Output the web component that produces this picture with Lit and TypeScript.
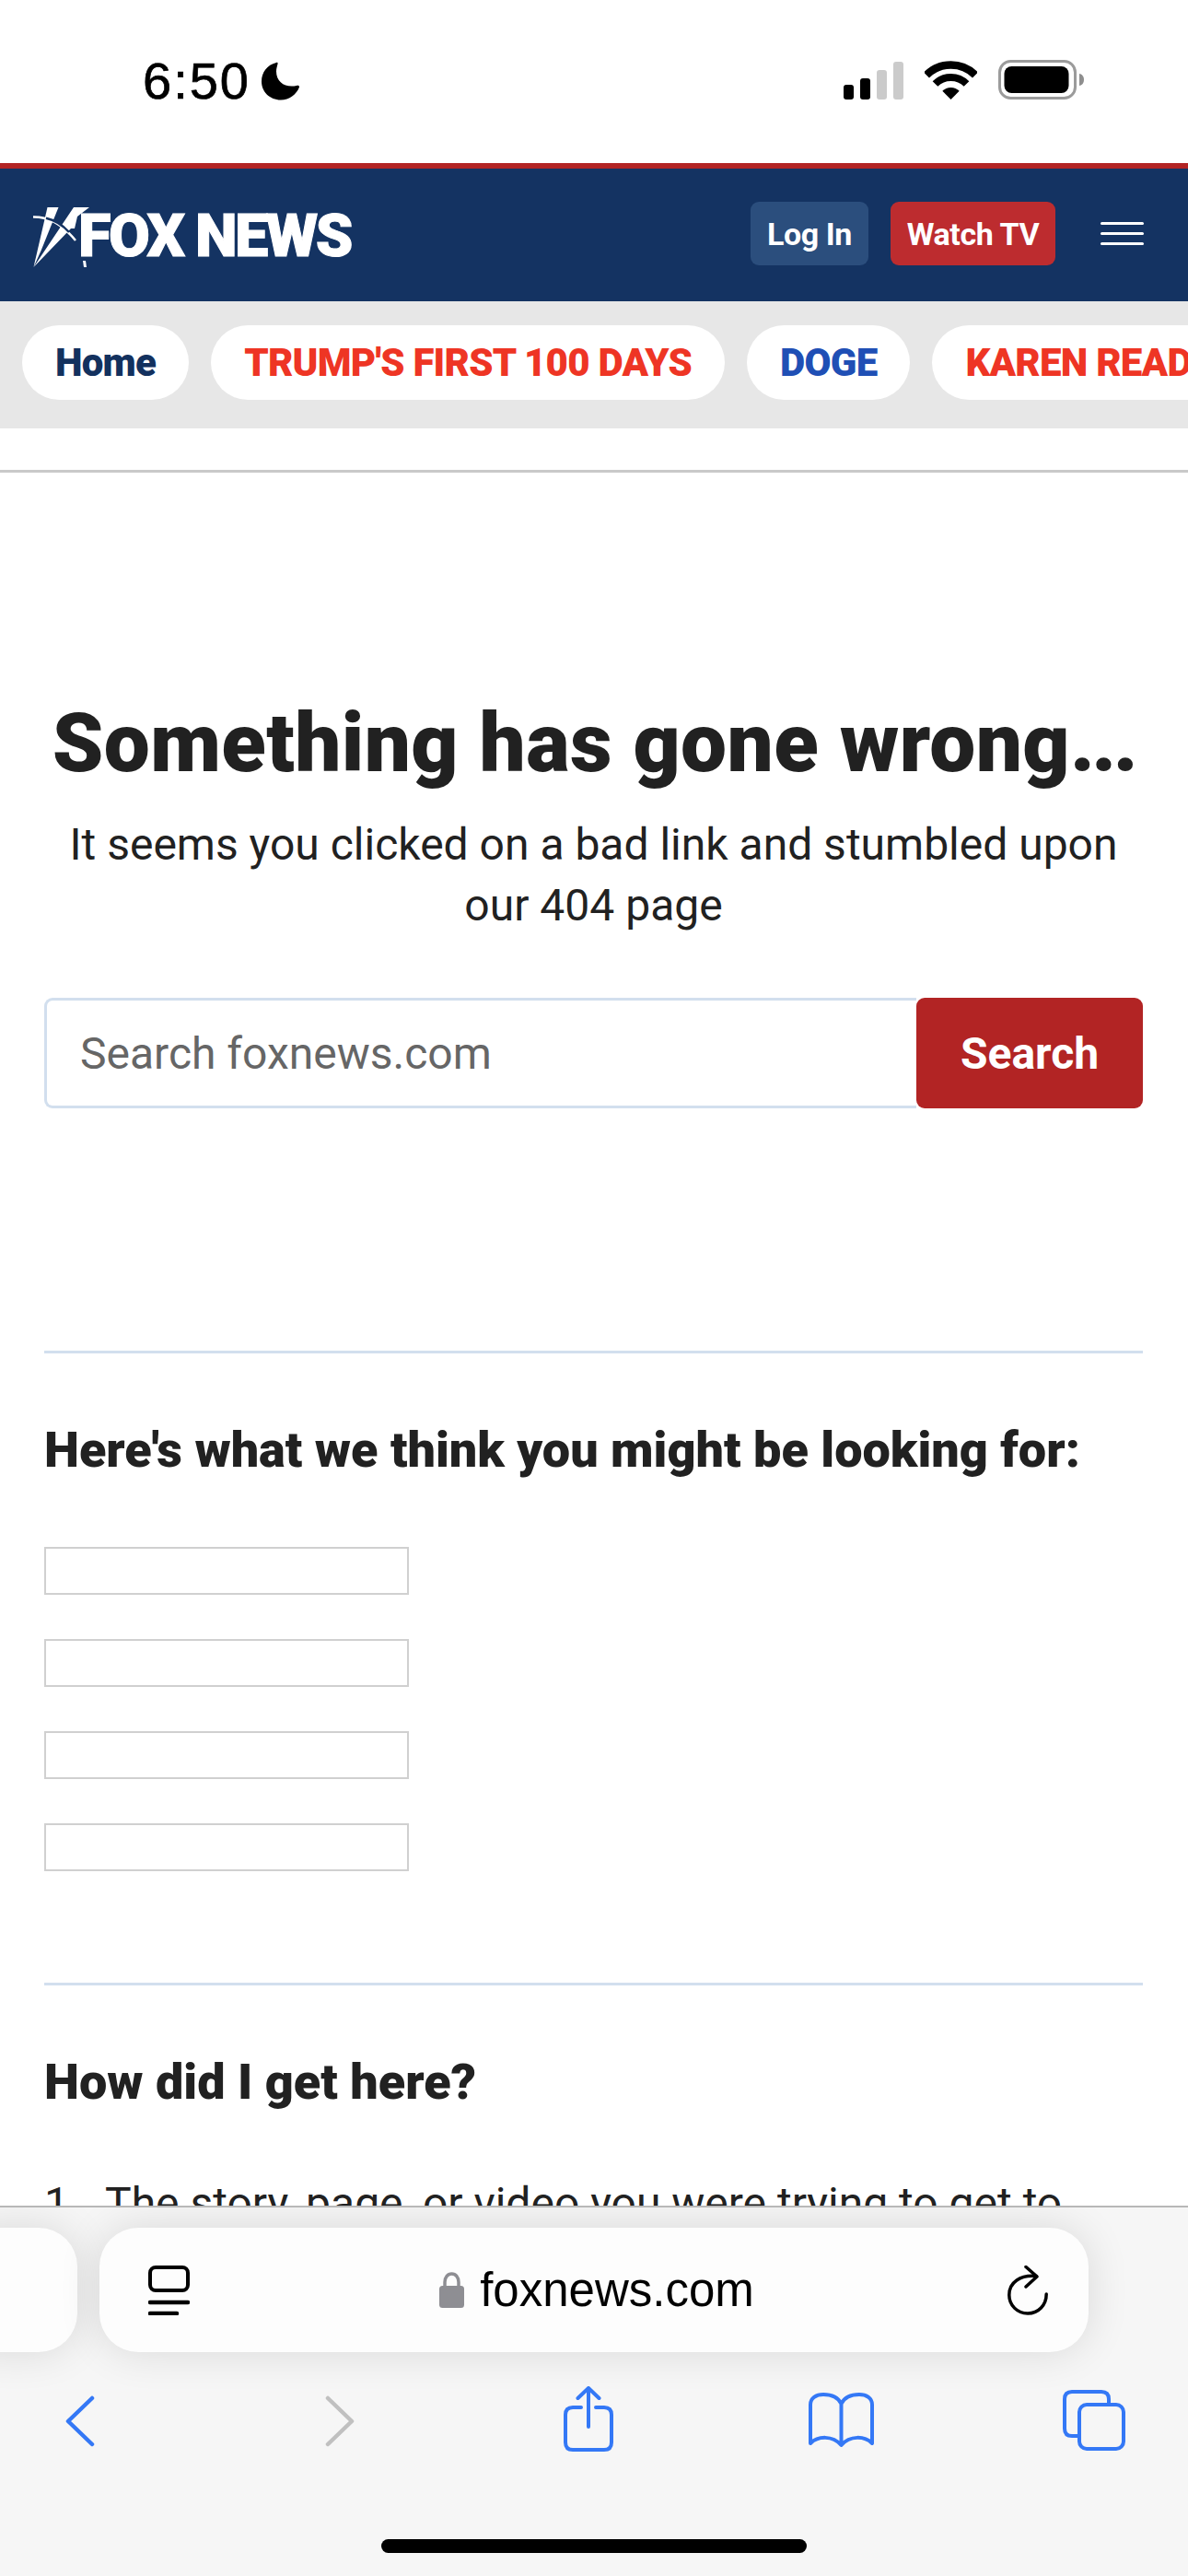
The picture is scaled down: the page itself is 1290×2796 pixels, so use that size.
import { LitElement, css, html } from "lit";
import { customElement } from "lit/decorators.js";

@customElement("app-root")
export class AppRoot extends LitElement {
  static styles = css`
    :host {
      display: flex;
      flex-direction: column;
      width: 1290px;
      height: 2796px;
      overflow: hidden;
      background: #fff;
      font-family: Roboto, sans-serif;
      color: #212121;
    }
    svg { display: block; flex: none; }

    /* status bar */
    .status {
      height: 177px;
      flex: none;
      box-sizing: border-box;
      padding: 0 113px 0 155px;
      display: flex;
      align-items: flex-start;
      font-family: "Liberation Sans", sans-serif;
      color: #000;
    }
    .time { font-size: 56px; line-height: 40px; margin-top: 68px; letter-spacing: 2px; -webkit-text-stroke: 0.7px #000; }
    .moon { margin: 67px 0 0 12px; }
    .sys { margin-left: auto; margin-top: 65px; display: flex; align-items: flex-end; gap: 23px; height: 43px; }
    .signal { display: flex; align-items: flex-end; gap: 7px; }
    .signal i { display: block; width: 11px; border-radius: 3px; background: #000; }
    .signal i.off { background: #cbcbcb; }
    .s1 { height: 16px; } .s2 { height: 23px; } .s3 { height: 32px; } .s4 { height: 41px; }

    /* site header */
    .masthead {
      height: 150px;
      flex: none;
      box-sizing: border-box;
      border-top: 6px solid #b22424;
      background: #143362;
      padding: 0 48px 0 36px;
      display: flex;
      align-items: center;
    }
    .logo { display: flex; align-items: flex-start; height: 66px; color: #fff; margin-top: 6px; }
    .logo svg { margin-right: -12px; }
    .logo span {
      font-weight: 900;
      font-size: 65px;
      line-height: 48px;
      margin-top: 7px;
      letter-spacing: -2.6px;
      white-space: nowrap;
      -webkit-text-stroke: 1px #fff;
    }
    .actions { margin-left: auto; margin-bottom: 3px; display: flex; align-items: center; }
    .btn {
      height: 69px;
      box-sizing: border-box;
      border-radius: 9px;
      display: flex;
      align-items: center;
      justify-content: center;
      color: #fff;
      font-weight: 700;
      font-size: 34px;
      letter-spacing: -0.4px;
      white-space: nowrap;
    }
    .login { width: 128px; background: #2b4e7d; margin-right: 24px; }
    .watch { width: 179px; background: #bd2c2f; margin-right: 49px; }
    .burger { display: flex; flex-direction: column; gap: 8px; width: 47px; }
    .burger i { display: block; height: 3px; border-radius: 2px; background: #fff; }

    /* section pills */
    .topics {
      height: 138px;
      flex: none;
      box-sizing: border-box;
      background: #e7e7e7;
      padding: 26px 0 0 24px;
      display: flex;
      align-items: flex-start;
      gap: 24px;
      overflow: hidden;
    }
    .pill {
      height: 81px;
      flex: none;
      box-sizing: border-box;
      padding: 0 36px;
      border-radius: 41px;
      background: #fff;
      display: flex;
      align-items: center;
      font-weight: 900;
      font-size: 42px;
      letter-spacing: -0.75px;
      white-space: nowrap;
    }
    .navy { color: #13315e; }
    .red { color: #ee3524; }
    .blue { color: #1f4fb5; }
    .rule { height: 3px; flex: none; margin-top: 45px; background: #c9c9c9; }

    /* 404 content */
    .page { flex: 1; min-height: 0; overflow: hidden; padding: 0 49px 0 48px; }
    .oops { margin-top: 244px; text-align: center; }
    h1 {
      margin: 0 -20px;
      font-size: 89px;
      line-height: 100px;
      font-weight: 900;
      letter-spacing: 0.4px;
      white-space: nowrap;
    }
    h1 span { letter-spacing: -3.500px; }
    .oops p { margin: 27px 0 0; font-size: 48px; line-height: 66px; }
    .search { display: flex; height: 120px; margin-top: 67px; }
    .field {
      flex: 1;
      box-sizing: border-box;
      border: 3px solid #d2dfee;
      border-right: 0;
      border-radius: 9px 0 0 9px;
      padding: 0 0 0 36px;
      display: flex;
      align-items: center;
      color: #666;
      font-size: 48px;
    }
    .go {
      width: 246px;
      border-radius: 9px;
      background: #b22424;
      color: #fff;
      display: flex;
      align-items: center;
      justify-content: center;
      font-weight: 700;
      font-size: 48px;
    }
    .split { height: 3px; background: #d2dfee; }
    .first { margin-top: 263px; }
    h2 { margin: 0; font-size: 54px; line-height: 64px; font-weight: 900; white-space: nowrap; }
    .first + h2 { margin-top: 73px; }
    .links { display: flex; flex-direction: column; gap: 48px; margin-top: 73px; }
    .links i { display: block; width: 396px; height: 52px; box-sizing: border-box; border: 2px solid #d0d0d0; }
    .second { margin-top: 121px; }
    .second + h2 { margin-top: 73px; }
    ol { margin: 67px 0 0; padding: 0; list-style: none; font-size: 48px; line-height: 66px; }
    li { display: flex; gap: 40px; }
    li b { font-weight: 400; width: 26px; flex: none; }

    /* safari chrome */
    .chrome {
      height: 402px;
      flex: none;
      box-sizing: border-box;
      border-top: 2px solid #b8b8b8;
      background: #f6f6f6;
      overflow: hidden;
      display: flex;
      flex-direction: column;
    }
    .tabs { display: flex; gap: 24px; margin: 22px 0 0 -48px; height: 135px; flex: none; }
    .prev, .bar {
      border-radius: 42px;
      background: #fdfdfd;
      box-shadow: 0 0 46px rgba(0, 0, 0, 0.12);
    }
    .prev { width: 132px; }
    .bar {
      width: 1074px;
      box-sizing: border-box;
      padding: 0 44px 0 53px;
      display: flex;
      align-items: center;
      color: #000;
    }
    .url {
      flex: 1;
      display: flex;
      align-items: center;
      justify-content: center;
      gap: 17px;
      font-family: "Liberation Sans", sans-serif;
      font-size: 51px;
      padding-right: 4px;
    }
    .tools {
      display: flex;
      align-items: flex-start;
      height: 80px;
      margin-top: 38px;
      flex: none;
      position: relative;
    }
    .tools svg { position: absolute; top: 0; }
    .home { width: 462px; height: 15px; border-radius: 8px; background: #000; margin: 85px auto 0; }
  `;

  render() {
    return html`
      <div class="status">
        <span class="time">6:50</span>
        <svg class="moon" width="41" height="42" viewBox="0 0 41 42">
          <path fill="#000" d="M16 1C6 3.500 0 11.500 0 21.500C0 32.500 9 41.500 21 41.500C30 41.500 38 35.500 41 27.500C41 25.500 39.500 25.500 38 26C26 28.500 16 22.500 16 10.500C16 7.500 17 4.500 17.500 2.500C18 1 17 .5 16 1Z"/>
        </svg>
        <div class="sys">
          <div class="signal"><i class="s1"></i><i class="s2"></i><i class="s3 off"></i><i class="s4 off"></i></div>
          <svg width="57" height="42" viewBox="0 0 57 42" fill="none" stroke="#000">
            <path stroke-width="8.500" d="M2 15.500A37.500 37.500 0 0 1 55 15.500"/>
            <path stroke-width="8" d="M11.500 25A24 24 0 0 1 45.500 25"/>
            <path fill="#000" stroke="none" d="M28.500 42L19.300 32.800A13 13 0 0 1 37.700 32.800Z"/>
          </svg>
          <svg width="93" height="43" viewBox="0 0 93 43">
            <rect x="1.500" y="1.500" width="82" height="40" rx="12" fill="none" stroke="#9b9b9b" stroke-width="3"/>
            <rect x="6.500" y="7" width="70" height="29" rx="8" fill="#000"/>
            <path fill="#8e8e8e" d="M88 15C91 15.500 93 18 93 21.500C93 25 91 27.500 88 28Z"/>
          </svg>
        </div>
      </div>

      <header class="masthead">
        <div class="logo">
          <svg width="61" height="66" viewBox="0 0 61 66">
            <path fill="none" stroke="#fff" stroke-width="2.500" d="M0 10.500Q25 10 46 36"/>
            <path fill="#fff" d="M.5 65L15.500 0H27.500L9 46Z"/>
            <path fill="#fff" d="M.5 65L44 0H61L48 10L45 23H41Z"/>
            <path fill="none" stroke="#143362" stroke-width="2.500" d="M14 11.800Q28 15 39 27"/>
            <path fill="#fff" d="M54 58H57L58 65H55Z"/>
          </svg>
          <span>FOX NEWS</span>
        </div>
        <div class="actions">
          <div class="btn login">Log In</div>
          <div class="btn watch">Watch TV</div>
          <div class="burger"><i></i><i></i><i></i></div>
        </div>
      </header>

      <nav class="topics">
        <div class="pill navy">Home</div>
        <div class="pill red">TRUMP'S FIRST 100 DAYS</div>
        <div class="pill blue">DOGE</div>
        <div class="pill red">KAREN READ</div>
      </nav>
      <div class="rule"></div>

      <main class="page">
        <section class="oops">
          <h1>Something has gone wrong<span>...</span></h1>
          <p>It seems you clicked on a bad link and stumbled upon our 404 page</p>
        </section>
        <div class="search">
          <div class="field">Search foxnews.com</div>
          <div class="go">Search</div>
        </div>
        <div class="split first"></div>
        <h2>Here's what we think you might be looking for:</h2>
        <div class="links"><i></i><i></i><i></i><i></i></div>
        <div class="split second"></div>
        <h2>How did I get here?</h2>
        <ol>
          <li><b>1.</b><span>The story, page, or video you were trying to get to</span></li>
        </ol>
      </main>

      <footer class="chrome">
        <div class="tabs">
          <div class="prev"></div>
          <div class="bar">
            <svg width="45" height="54" viewBox="0 0 45 54" fill="none" stroke="#000" stroke-width="4" stroke-linecap="round">
              <rect x="2" y="2" width="41" height="25" rx="6"/>
              <path d="M2 41H43M2 53H31" stroke-width="4.500" transform="translate(0 -1)"/>
            </svg>
            <div class="url">
              <svg width="27" height="39" viewBox="0 0 27 39">
                <path fill="none" stroke="#8e8e93" stroke-width="3.500" d="M6 18V11C6 6 9 2 13.500 2C18 2 21 6 21 11V18"/>
                <rect x="0" y="15" width="27" height="24" rx="3.500" fill="#8e8e93"/>
              </svg>
              <span>foxnews.com</span>
            </div>
            <svg width="44" height="54" viewBox="0 0 44 54" fill="none" stroke="#000" stroke-width="3.500" stroke-linecap="round" stroke-linejoin="round">
              <path d="M20 1.500L32 12L20 23"/>
              <path d="M31 11.500C14 10 1.800 18 1.800 32C1.800 43 10.500 52 22 52C33.500 52 42.200 43 42.200 31"/>
            </svg>
          </div>
        </div>
        <div class="tools">
          <svg style="left:71px;margin-top:9px" width="32" height="56" viewBox="0 0 32 56" fill="none" stroke="#3478f6" stroke-width="4.500" stroke-linecap="round" stroke-linejoin="round"><path d="M29 3L3 28L29 53"/></svg>
          <svg style="left:353px;margin-top:9px" width="32" height="56" viewBox="0 0 32 56" fill="none" stroke="#c0c0c0" stroke-width="4.500" stroke-linecap="round" stroke-linejoin="round"><path d="M3 3L29 28L3 53"/></svg>
          <svg style="left:612px;margin-top:-1px" width="54" height="72" viewBox="0 0 54 72" fill="none" stroke="#3478f6" stroke-width="4" stroke-linecap="round" stroke-linejoin="round">
            <path d="M19 23H10Q2 23 2 31V61Q2 69 10 69H44Q52 69 52 61V31Q52 23 44 23H35"/>
            <path d="M27 44V2M15.500 13L27 2L38.500 13"/>
          </svg>
          <svg style="left:878px;margin-top:6px" width="71" height="60" viewBox="0 0 71 60" fill="none" stroke="#3478f6" stroke-width="4" stroke-linejoin="round">
            <path d="M35.500 12C32 5 25 2 16 2C8 2 2 6 2 13V55C10 47 26 46 35.500 57C45 46 61 47 69 55V13C69 6 63 2 55 2C46 2 39 5 35.500 12V56"/>
          </svg>
          <svg style="left:1154px;margin-top:3px" width="68" height="67" viewBox="0 0 68 67" fill="none" stroke="#3478f6" stroke-width="4">
            <path d="M17 50H10Q2 50 2 42V10Q2 2 10 2H42Q50 2 50 10V15"/>
            <rect x="18" y="16" width="48" height="48" rx="8"/>
          </svg>
        </div>
        <div class="home"></div>
      </footer>
    `;
  }
}
